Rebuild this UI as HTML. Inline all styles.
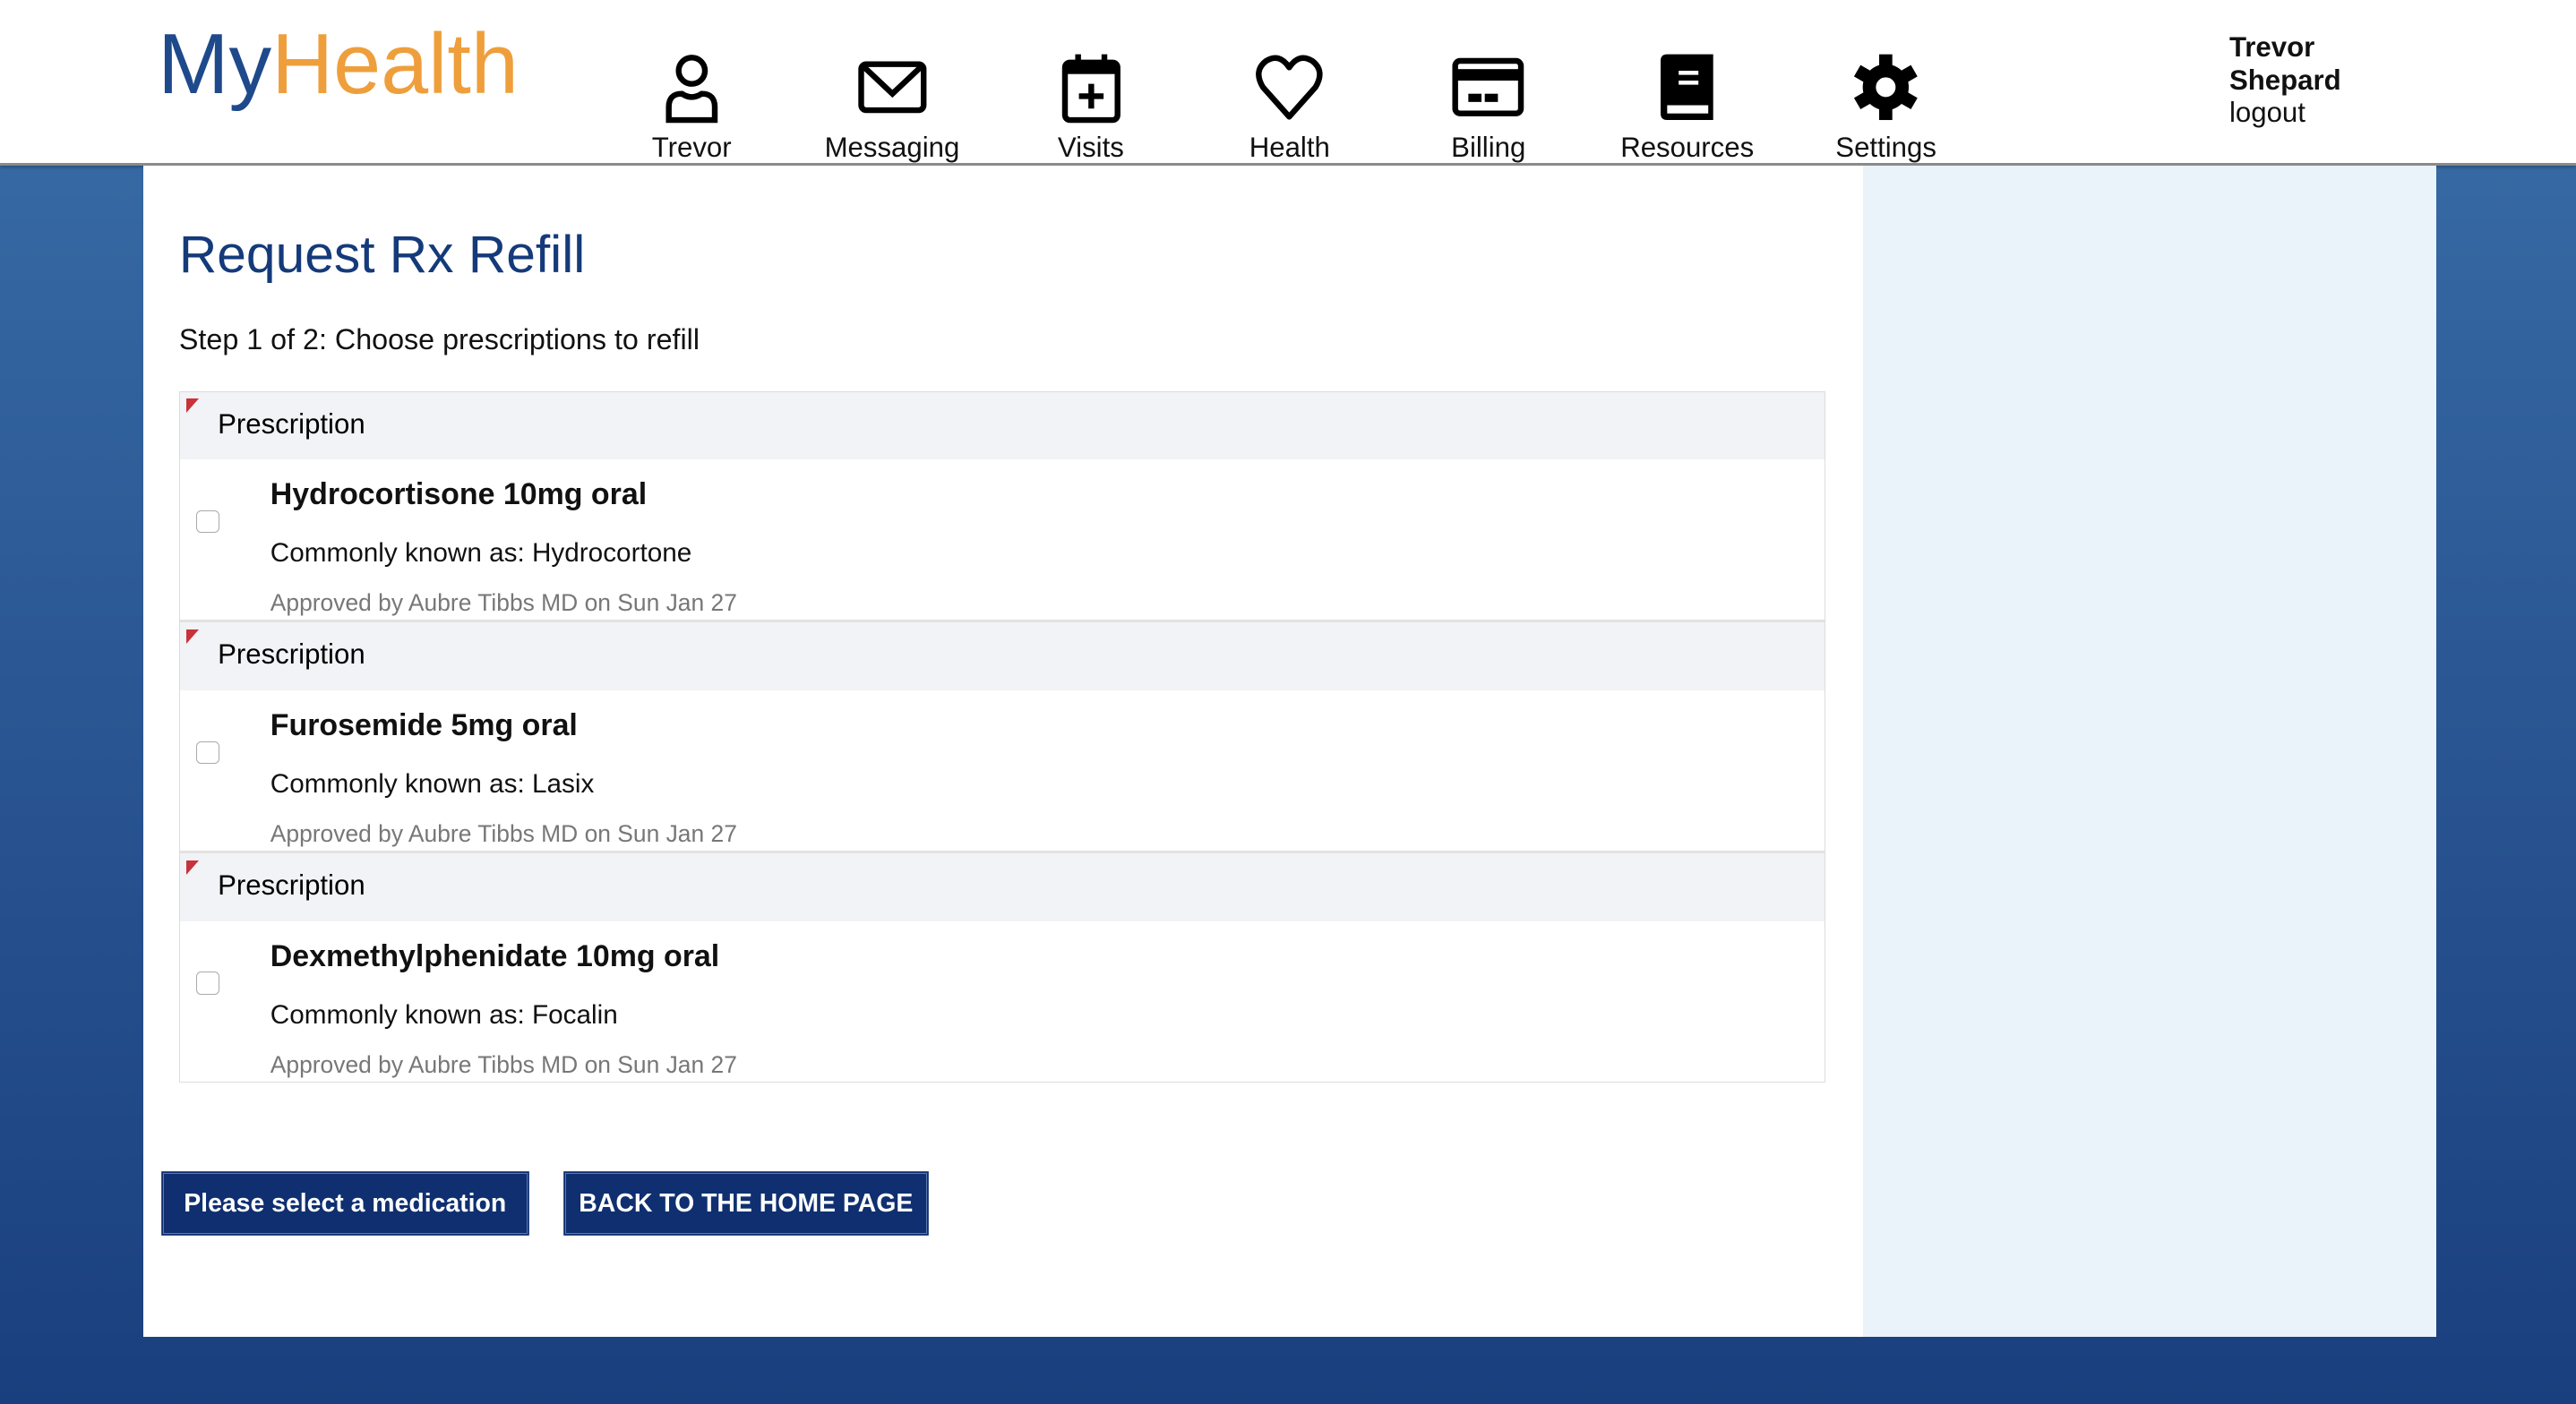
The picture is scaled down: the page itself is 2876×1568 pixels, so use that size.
<!DOCTYPE html>
<html><head><meta charset="utf-8"><style>
html{zoom:1.83418}
body{margin:0;width:1568px;height:855px;overflow:hidden;font-family:"Liberation Sans",sans-serif;background:linear-gradient(#3a6ea8,#1a3f7e);position:relative}
.hdr{position:absolute;left:0;top:0;width:1568px;height:99px;background:#fff;border-bottom:2px solid #8a8a8a;box-shadow:0 1px 2px rgba(0,0,0,.3)}
.logo{position:absolute;left:96px;top:10px;font-size:52px;letter-spacing:0}
.nav{position:absolute;top:31px;width:120px;text-align:center;font-size:17px;color:#111}
.nav svg{display:block;margin:0 auto 5px;width:44px;height:44px}
.user{position:absolute;left:1357px;top:19px;font-size:17px;line-height:20px;color:#111}
.main{position:absolute;left:87px;top:101px;width:1047px;height:713px;background:#fff}
.side{position:absolute;left:1134px;top:101px;width:349px;height:713px;background:#eaf2fa}
h1{position:absolute;left:22px;top:36px;margin:0;font-weight:normal;font-size:32px;color:#143a7a}
.step{position:absolute;left:22px;top:96px;font-size:17.6px;color:#111}
.tbl{position:absolute;left:22px;top:137px;width:1001px;border:1px solid #ddd}
.g{position:relative;height:139px;border-bottom:2px solid #e2e2e2}
.g:last-child{border-bottom:0;height:139px}
.gh{height:41px;background:#f2f3f7;font-size:17px;line-height:39px;padding-left:23px;position:relative}
.gh:before{content:"";position:absolute;left:4px;top:4px;border-top:9px solid #c8323a;border-right:8px solid transparent}
.cb{position:absolute;left:10px;top:72px;width:13px;height:13px;border:1px solid #aaa;border-radius:3px}
.n{position:absolute;left:55px;top:52px;font-size:18.5px;font-weight:bold;color:#111}
.c{position:absolute;left:55px;top:89px;font-size:16.2px;color:#111}
.a{position:absolute;left:55px;top:120px;font-size:14.4px;color:#777}
.btn{position:absolute;top:714px;height:36px;background:#0f2f70;border:1px solid #5a7ab0;color:#fff;font-weight:bold;font-size:15.5px;line-height:36px;text-align:center;box-shadow:0 0 0 1px #0f2f70}
</style></head><body>
<div class="hdr">
<div class="logo"><span style="color:#1e4a8c">My</span><span style="color:#ee9f3c">Health</span></div>
<div class="nav" style="left:361px"><svg viewBox="0 0 44 44"><circle cx="22" cy="12" r="8" fill="none" stroke="#000" stroke-width="3.5"/><path d="M8 42 V34 Q8 26 16 26 Q22 30 28 26 Q36 26 36 34 V42 Z" fill="none" stroke="#000" stroke-width="3.5"/></svg>Trevor</div>
<div class="nav" style="left:483px"><svg viewBox="0 0 44 44"><rect x="3" y="8" width="38" height="28" rx="3" fill="none" stroke="#000" stroke-width="3.5"/><path d="M5 10 L22 26 L39 10" fill="none" stroke="#000" stroke-width="3.5"/></svg>Messaging</div>
<div class="nav" style="left:604px"><svg viewBox="0 0 44 44"><rect x="6" y="7" width="32" height="35" rx="3" fill="none" stroke="#000" stroke-width="3.5"/><rect x="6" y="7" width="32" height="7" fill="#000"/><path d="M14 2v8M30 2v8M22 20v15M14.5 27.5h15" stroke="#000" stroke-width="3.5"/></svg>Visits</div>
<div class="nav" style="left:725px"><svg viewBox="0 0 44 44"><path d="M22 40 L6 22 Q0 12 8 6 Q16 1 22 10 Q28 1 36 6 Q44 12 38 22 Z" fill="none" stroke="#000" stroke-width="3.5" stroke-linejoin="round"/></svg>Health</div>
<div class="nav" style="left:846px"><svg viewBox="0 0 44 44"><rect x="2" y="6" width="40" height="32" rx="3" fill="none" stroke="#000" stroke-width="3.5"/><rect x="2" y="11" width="40" height="7" fill="#000"/><rect x="10" y="26" width="8" height="5" fill="#000"/><rect x="20" y="26" width="8" height="5" fill="#000"/></svg>Billing</div>
<div class="nav" style="left:967px"><svg viewBox="0 0 44 44"><path d="M6 6 Q6 2 10 2 H38 V42 H10 Q6 42 6 38 Z" fill="#000"/><rect x="10" y="33" width="25" height="5" fill="#fff"/><rect x="17" y="12" width="12" height="2.5" fill="#fff"/><rect x="17" y="18" width="12" height="2.5" fill="#fff"/></svg>Resources</div>
<div class="nav" style="left:1088px"><svg viewBox="0 0 44 44"><g transform="translate(22 22)" fill="#000"><circle r="14"/><rect x="-4" y="-20" width="8" height="40"/><rect x="-4" y="-20" width="8" height="40" transform="rotate(60)"/><rect x="-4" y="-20" width="8" height="40" transform="rotate(120)"/></g><circle cx="22" cy="22" r="6" fill="#fff"/></svg>Settings</div>
<div class="user"><b>Trevor<br>Shepard</b><br>logout</div>
</div>
<div class="main">
<h1>Request Rx Refill</h1>
<div class="step">Step 1 of 2: Choose prescriptions to refill</div>
<div class="tbl">
<div class="g"><div class="gh">Prescription</div><div class="cb"></div><div class="n">Hydrocortisone 10mg oral</div><div class="c">Commonly known as: Hydrocortone</div><div class="a">Approved by Aubre Tibbs MD on Sun Jan 27</div></div>
<div class="g"><div class="gh">Prescription</div><div class="cb"></div><div class="n">Furosemide 5mg oral</div><div class="c">Commonly known as: Lasix</div><div class="a">Approved by Aubre Tibbs MD on Sun Jan 27</div></div>
<div class="g"><div class="gh">Prescription</div><div class="cb"></div><div class="n">Dexmethylphenidate 10mg oral</div><div class="c">Commonly known as: Focalin</div><div class="a">Approved by Aubre Tibbs MD on Sun Jan 27</div></div>
</div>
</div>
<div class="side"></div>
<div class="btn" style="left:99px;width:221px">Please select a medication</div>
<div class="btn" style="left:344px;width:219px">BACK TO THE HOME PAGE</div>
</body></html>
